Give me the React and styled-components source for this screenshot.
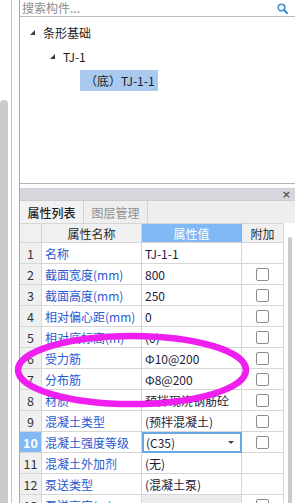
import styled, { createGlobalStyle } from "styled-components";

const GlobalStyle = createGlobalStyle`
  html, body {
    margin: 0;
    padding: 0;
    background: #ffffff;
  }
  body {
    font-family: "Noto Sans CJK SC", "Noto Sans", sans-serif;
    font-size: 12px;
    color: #222;
  }
`;

const rows = [
  { no: 1, name: "名称", value: "TJ-1-1", check: false },
  { no: 2, name: "截面宽度(mm)", value: "800", check: true },
  { no: 3, name: "截面高度(mm)", value: "250", check: true },
  { no: 4, name: "相对偏心距(mm)", value: "0", check: true },
  { no: 5, name: "相对底标高(m)", value: "(0)", check: true },
  { no: 6, name: "受力筋", value: "Φ10@200", check: true },
  { no: 7, name: "分布筋", value: "Φ8@200", check: true },
  { no: 8, name: "材质", value: "预拌现浇钢筋砼", check: true },
  { no: 9, name: "混凝土类型", value: "(预拌混凝土)", check: true },
  { no: 10, name: "混凝土强度等级", value: "(C35)", check: true, active: true },
  { no: 11, name: "混凝土外加剂", value: "(无)", check: false },
  { no: 12, name: "泵送类型", value: "(混凝土泵)", check: false },
  { no: 13, name: "泵送高度(m)", value: "", check: true, muted: true },
];

function App() {
  return (
    <>
      <GlobalStyle />
      <Page>
        <OuterTrack>
          <OuterThumb />
        </OuterTrack>
        <Gutter />
        <Main>
          <SearchBar>
            <SearchText>搜索构件...</SearchText>
            <svg width="11" height="11" viewBox="0 0 11 11">
              <circle cx="4.5" cy="4.5" r="3.3" fill="none" stroke="#3d8fd1" strokeWidth="1.6" />
              <path d="M7 7 L10 10" stroke="#3d8fd1" strokeWidth="2.2" strokeLinecap="round" />
            </svg>
          </SearchBar>

          <TreePanel>
            <TreeRow $indent={10}>
              <Caret />
              <TreeLabel>条形基础</TreeLabel>
            </TreeRow>
            <TreeRow $indent={30}>
              <Caret />
              <TreeLabel>TJ-1</TreeLabel>
            </TreeRow>
            <TreeRow $indent={60}>
              <TreeLabel $selected>（底）TJ-1-1</TreeLabel>
            </TreeRow>
          </TreePanel>

          <TitleBar>
            <CloseMark>×</CloseMark>
          </TitleBar>

          <TabStrip>
            <Tab $active>属性列表</Tab>
            <Tab>图层管理</Tab>
          </TabStrip>

          <TableArea>
            <Grid>
              <Row $head>
                <HeadCell />
                <HeadCell>属性名称</HeadCell>
                <HeadCell $blue>属性值</HeadCell>
                <HeadCell>附加</HeadCell>
              </Row>
              {rows.map((r) => (
                <Row key={r.no}>
                  <NumCell $active={r.active}>{r.no}</NumCell>
                  <NameCell>{r.name}</NameCell>
                  {r.active ? (
                    <ValueCell $editing>
                      <span>{r.value}</span>
                      <DropArrow />
                    </ValueCell>
                  ) : (
                    <ValueCell $muted={r.muted}>{r.value}</ValueCell>
                  )}
                  <CheckCell>{r.check && <CheckBox />}</CheckCell>
                </Row>
              ))}
            </Grid>
            <ScrollTrack>
              <ScrollThumb />
            </ScrollTrack>
          </TableArea>
        </Main>

        <Annotation width="295" height="503" viewBox="0 0 295 503">
          <ellipse
            cx="132"
            cy="370"
            rx="114"
            ry="34"
            fill="none"
            stroke="#ef1fef"
            strokeWidth="6.5"
          />
        </Annotation>
      </Page>
    </>
  );
}

export default App;

const Page = styled.div`
  position: relative;
  display: flex;
  width: 295px;
  height: 503px;
  overflow: hidden;
  background: #fff;
`;

const OuterTrack = styled.div`
  width: 8px;
  padding-top: 100px;
  display: flex;
  flex-direction: column;
`;

const OuterThumb = styled.div`
  flex: 1;
  background: #cbcbcb;
  border-radius: 4px 4px 0 0;
`;

const Gutter = styled.div`
  width: 8px;
  box-sizing: border-box;
  margin-left: 3px;
  border-left: 1px solid #c4c4c4;
`;

const Main = styled.div`
  flex: 1;
  display: flex;
  flex-direction: column;
  border-left: 1px solid #a9a9a9;
  min-width: 0;
`;

const SearchBar = styled.div`
  height: 16px;
  border-bottom: 1px solid #bcbcbc;
  display: flex;
  align-items: center;
  justify-content: space-between;
  padding: 0 7px 0 2px;
  svg {
    margin-top: 1px;
  }
`;

const SearchText = styled.span`
  color: #8c8c8c;
  font-size: 12px;
  line-height: 16px;
`;

const TreePanel = styled.div`
  height: 167px;
  box-sizing: border-box;
  padding-top: 3px;
  border-bottom: 1px solid #b4b4b4;
`;

const TreeRow = styled.div`
  height: 24px;
  display: flex;
  align-items: center;
  padding-left: ${(p) => p.$indent}px;
`;

const Caret = styled.span`
  width: 0;
  height: 0;
  border-left: 5px solid transparent;
  border-bottom: 5px solid #3a3a3a;
  margin-right: 8px;
  margin-top: 1px;
`;

const TreeLabel = styled.span`
  font-size: 12px;
  line-height: 21px;
  height: 21px;
  padding: 0 ${(p) => (p.$selected ? "3px 0 5px" : "0")};
  background: ${(p) => (p.$selected ? "#a9c9ee" : "transparent")};
  color: #1a1a1a;
  white-space: nowrap;
`;

const TitleBar = styled.div`
  margin-top: 4px;
  height: 11px;
  background: #d6d8dd;
  border-top: 1px solid #cdd0d6;
  border-bottom: 1px solid #c9ccd2;
  display: flex;
  align-items: center;
  justify-content: flex-end;
  padding-right: 4px;
`;

const CloseMark = styled.span`
  font-family: "DejaVu Sans", sans-serif;
  font-size: 11px;
  line-height: 11px;
  color: #555;
  font-weight: bold;
`;

const TabStrip = styled.div`
  height: 22px;
  background: #eeeeee;
  display: flex;
`;

const Tab = styled.div`
  width: 64px;
  box-sizing: border-box;
  border-right: 1px solid #d2d2d2;
  display: flex;
  align-items: center;
  justify-content: center;
  font-size: 12px;
  color: ${(p) => (p.$active ? "#1e1e1e" : "#8e8e8e")};
  font-weight: ${(p) => (p.$active ? 500 : 400)};
  background: ${(p) => (p.$active ? "#f2f2f2" : "#eeeeee")};
`;

const TableArea = styled.div`
  flex: 1;
  display: flex;
  min-height: 0;
`;

const Grid = styled.div`
  width: 264px;
  display: flex;
  flex-direction: column;
`;

const Row = styled.div`
  display: grid;
  grid-template-columns: 22px 100px 100px 42px;
  height: ${(p) => (p.$head ? 20 : 21)}px;
  flex-shrink: 0;
`;

const Cell = styled.div`
  box-sizing: border-box;
  border-right: 1px solid #d6d6d6;
  border-bottom: 1px solid #d6d6d6;
  display: flex;
  align-items: center;
  font-size: 12px;
  white-space: nowrap;
  overflow: hidden;
`;

const HeadCell = styled(Cell)`
  justify-content: center;
  background: ${(p) => (p.$blue ? "#80b9f5" : "#f0f0f0")};
  color: ${(p) => (p.$blue ? "#ffffff" : "#2a2a2a")};
  border-top: 1px solid #d6d6d6;
  border-right-color: ${(p) => (p.$blue ? "#7ab2ee" : "#d6d6d6")};
`;

const NumCell = styled(Cell)`
  justify-content: center;
  background: ${(p) => (p.$active ? "#80b9f5" : "#f0f0f0")};
  color: ${(p) => (p.$active ? "#ffffff" : "#333")};
  font-weight: ${(p) => (p.$active ? 700 : 400)};
  font-size: 12.5px;
`;

const NameCell = styled(Cell)`
  padding-left: 3px;
  color: #2b59cf;
`;

const ValueCell = styled(Cell)`
  padding-left: 3px;
  color: #1b1b3a;
  background: ${(p) => (p.$muted ? "#ececec" : "#fff")};
  justify-content: space-between;
  ${(p) =>
    p.$editing &&
    `
    border: 2px solid #68a6e6;
    padding-left: 2px;
    padding-right: 6px;
  `}
`;

const DropArrow = styled.span`
  width: 0;
  height: 0;
  border-left: 3px solid transparent;
  border-right: 3px solid transparent;
  border-top: 3px solid #444;
`;

const CheckCell = styled(Cell)`
  justify-content: center;
`;

const CheckBox = styled.span`
  width: 13px;
  height: 13px;
  box-sizing: border-box;
  border: 1px solid #8c8c8c;
  border-radius: 2px;
  background: #fff;
`;

const ScrollTrack = styled.div`
  flex: 1;
  padding: 14px 3px 0 4px;
  display: flex;
`;

const ScrollThumb = styled.div`
  flex: 1;
  background: #c9c9c9;
  border-radius: 4px 4px 0 0;
`;

const Annotation = styled.svg`
  position: absolute;
  left: 0;
  top: 0;
  pointer-events: none;
`;
